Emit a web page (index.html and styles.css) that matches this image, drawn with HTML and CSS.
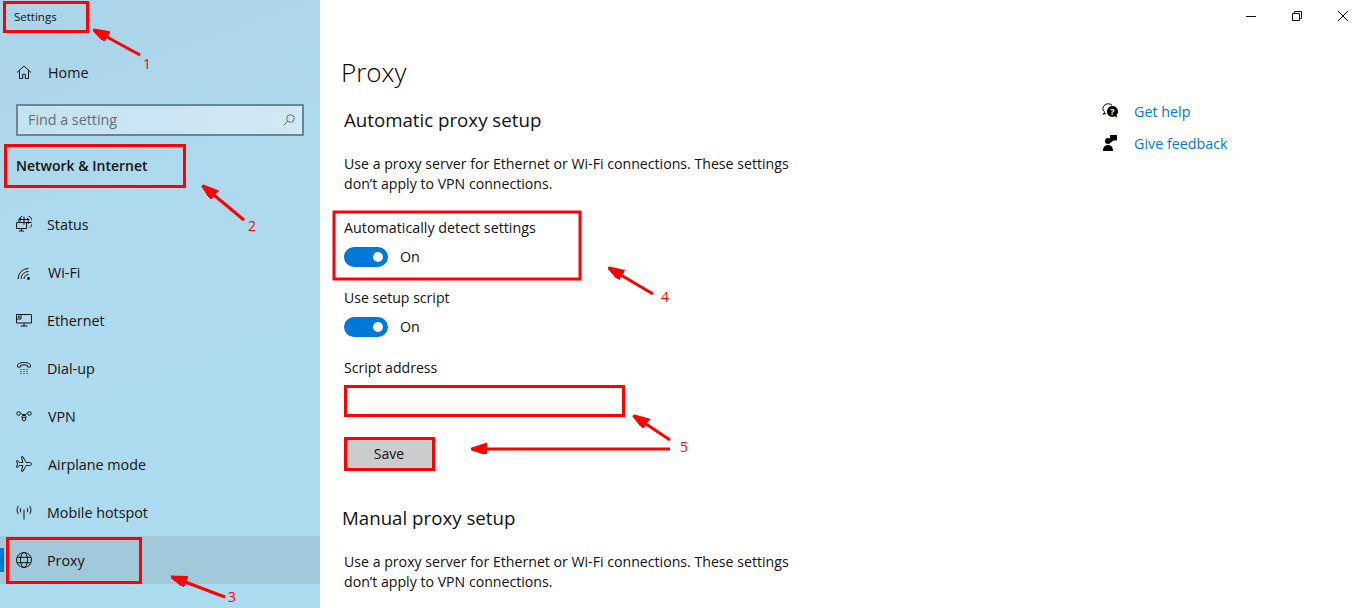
FILE: index.html
```html
<!DOCTYPE html>
<html lang="en">
<head>
    <meta charset="UTF-8">
    <title>Settings</title>
    <link rel="stylesheet" href="styles.css">
</head>
<body>
    <div class="app">
        <aside class="sidebar">
            <div class="app-title">Settings</div>
            <a class="nav-item home wide">
                <svg class="nav-icon" viewBox="0 0 16 16"><path d="M1 8.500 8 2l7 6.500M3.500 6.500v8h3.200v-4.200h2.600v4.200h3.200v-8"/></svg>
                <span>Home</span>
            </a>
            <div class="search">
                <span>Find a setting</span>
                <svg class="search-icon" viewBox="0 0 12 12"><circle cx="7.500" cy="4.500" r="3.800"/><path d="M4.700 7.300.6 11.500"/></svg>
            </div>
            <h2 class="section-title">Network &amp; Internet</h2>
            <nav class="nav-list">
                <a class="nav-item">
                    <svg class="nav-icon" viewBox="0 0 16 16"><path d="M2.500 5.500A7 7 0 1 1 14 11.500M8 .6v8M4.800 1.800C4.300 3 4 4.200 4 5.500M11.200 1.800c1 1.600 1.300 3.400 1.200 6M3 3.500h10.500M8 6.500h7.400M.6 6.500h10v6H.6zM5.600 12.500v2.500M3 15h5"/></svg>
                    <span>Status</span>
                </a>
                <a class="nav-item wide">
                    <svg class="nav-icon" viewBox="0 0 16 16"><path d="M2 15A10.500 10.500 0 0 1 12.500 4.500M5 15a7.500 7.500 0 0 1 7.500-7.500M8 15a4.500 4.500 0 0 1 4.500-4.500"/><circle class="solid" cx="12.500" cy="14.500" r="1.400"/></svg>
                    <span>Wi-Fi</span>
                </a>
                <a class="nav-item">
                    <svg class="nav-icon" viewBox="0 0 16 16"><path d="M.5 2.500h15V11H.5zM.5 2.500H5V7H.5zM2.200 4.300h1.200v1H2.200zM8 11v3M4.500 14h7"/></svg>
                    <span>Ethernet</span>
                </a>
                <a class="nav-item">
                    <svg class="nav-icon" viewBox="0 0 16 16"><path d="M1.500 7V5.200C1.500 3.600 4.500 2.500 8 2.500s6.500 1.100 6.500 2.700V7h-3V5.300c-1-.5-6-.5-7 0V7z"/><path class="dots" d="M4.500 9.500h1M7.500 9.500h1M10.500 9.500h1M4.500 11.500h1M7.500 11.500h1M10.500 11.500h1M4.500 13.500h1M7.500 13.500h1M10.500 13.500h1"/></svg>
                    <span>Dial-up</span>
                </a>
                <a class="nav-item wide">
                    <svg class="nav-icon" viewBox="0 0 16 16"><circle cx="2.600" cy="5.500" r="1.800"/><circle cx="13.400" cy="5.500" r="1.800"/><circle cx="8" cy="11" r="1.800"/><path d="M4.400 5.500c1.500 0 2.200 1.200 3.600 2.500 1.400-1.300 2-2.500 3.600-2.500M6.500 10C5.500 9 5.800 7.500 8 6.300c2.200 1.200 2.500 2.700 1.500 3.700"/></svg>
                    <span>VPN</span>
                </a>
                <a class="nav-item wide">
                    <svg class="nav-icon" viewBox="0 0 16 16"><path d="M15.500 8c0-1-1-1.500-2-1.500H10L7 .8H5.500l1.300 5.700H3.500L2 4.800H.6l.9 3.200-.9 3.200H2l1.500-1.700h3.300L5.500 15.200H7L10 9.500h3.500c1 0 2-.5 2-1.500z"/></svg>
                    <span>Airplane mode</span>
                </a>
                <a class="nav-item">
                    <svg class="nav-icon" viewBox="0 0 16 16"><path d="M8 5.500v10M2.400 2C.6 4.200.6 7.300 2.400 10M13.600 2c1.800 2.200 1.800 5.300 0 8M5 3.800c-1 1.300-1 3 0 4.500M11 3.800c1 1.300 1 3 0 4.500"/></svg>
                    <span>Mobile hotspot</span>
                </a>
                <a class="nav-item active">
                    <svg class="nav-icon" viewBox="0 0 16 16"><circle cx="8" cy="8" r="7.500"/><ellipse cx="8" cy="8" rx="3.500" ry="7.500"/><path d="M1.200 5.300h13.600M1.200 10.700h13.600"/></svg>
                    <span>Proxy</span>
                </a>
            </nav>
        </aside>

        <main class="content">
            <div class="settings">
                <h1>Proxy</h1>
                <h3>Automatic proxy setup</h3>
                <p class="note">Use a proxy server for Ethernet or Wi-Fi connections. These settings<br>don’t apply to VPN connections.</p>
                <div class="field first">
                    <label>Automatically detect settings</label>
                    <div class="toggle-row"><span class="toggle"></span><span>On</span></div>
                </div>
                <div class="field">
                    <label class="short">Use setup script</label>
                    <div class="toggle-row"><span class="toggle"></span><span>On</span></div>
                </div>
                <div class="field">
                    <label class="short">Script address</label>
                    <div class="text-input"></div>
                </div>
                <button class="save" type="button">Save</button>
                <h3 class="manual">Manual proxy setup</h3>
                <p class="note">Use a proxy server for Ethernet or Wi-Fi connections. These settings<br>don’t apply to VPN connections.</p>
            </div>

            <div class="side-links">
                <a class="link-row">
                    <svg viewBox="0 0 16 16">
                        <path class="line" d="M3 9.500C1 8 .5 6 1.200 4.200 2 2 4 .8 6.300.8c1.500 0 2.800.5 3.700 1.400"/>
                        <path class="line" d="M3 9.500 1 11l3-.3"/>
                        <path class="fill" d="M10.500 3a5.500 5.500 0 0 0-3.900 9.400c1.500 1.400 4.200 1.700 5.900.8l3 1.600-1-2.600A5.500 5.500 0 0 0 10.500 3z"/>
                        <text class="mark" x="10.500" y="11.500">?</text>
                    </svg>
                    <span>Get help</span>
                </a>
                <a class="link-row">
                    <svg viewBox="0 0 16 16"><path class="fill" d="M8 0h7v5.500h-3.500L9 7.500v-2H8zM6 3a3 3 0 1 1 0 6 3 3 0 0 1 0-6zM1 16c0-4 2-6 5-6s5 2 5 6z"/></svg>
                    <span>Give feedback</span>
                </a>
            </div>

            <div class="window-controls">
                <svg viewBox="0 0 10 10"><path d="M0 5.500h10"/></svg>
                <svg viewBox="0 0 10 10"><path d="M.5 2.500h7v7h-7zM2.500 2.500v-2h7v7h-2"/></svg>
                <svg viewBox="0 0 10 10"><path d="M0 0l10 10M10 0 0 10"/></svg>
            </div>
        </main>
    </div>

    <!-- annotations drawn over the screenshot -->
    <svg class="notes" viewBox="0 0 1365 608">
        <defs>
            <marker id="head" markerUnits="userSpaceOnUse" markerWidth="16" markerHeight="12" refX="15" refY="5" orient="auto">
                <path d="M0 0 15 5 0 10 3 5z" fill="#f00"/>
            </marker>
        </defs>
        <rect x="4.500" y="2.500" width="83" height="29"/>
        <rect x="5.500" y="145.500" width="179" height="41"/>
        <rect x="7.500" y="538.500" width="133" height="44"/>
        <rect x="334" y="212" width="246" height="67"/>
        <rect x="345.500" y="386.500" width="278" height="29"/>
        <rect x="345.500" y="438.500" width="88" height="31"/>
        <path d="M140 55 94 30" marker-end="url(#head)"/>
        <path d="M244 220 203 186" marker-end="url(#head)"/>
        <path d="M225 597 172 577" marker-end="url(#head)"/>
        <path d="M653 294 609 268" marker-end="url(#head)"/>
        <path d="M670 440 634 416" marker-end="url(#head)"/>
        <path d="M670 449H472" marker-end="url(#head)"/>
        <text x="143" y="69">1</text>
        <text x="248" y="231">2</text>
        <text x="228" y="602">3</text>
        <text x="661" y="302">4</text>
        <text x="680" y="452">5</text>
    </svg>
</body>
</html>
```

FILE: styles.css
```css
* {
    margin: 0;
    padding: 0;
    box-sizing: border-box;
}

body {
    width: 1365px;
    height: 608px;
    overflow: hidden;
    position: relative;
    font-family: "Open Sans", sans-serif;
    font-size: 14.3px;
    color: #111;
    background-color: white;
}

.app {
    display: flex;
    height: 608px;
}

/* left column */
.sidebar {
    width: 320px;
    flex-shrink: 0;
    background: linear-gradient(160deg, #a9d4ea 0%, #aedaef 35%, #abdcf0 100%);
}

.app-title {
    height: 33px;
    padding: 9px 0 0 14px;
    font-size: 11.500px;
    line-height: 16px;
}

.nav-item {
    display: flex;
    align-items: center;
    height: 48px;
    padding-left: 16px;
    gap: 15px;
}

.nav-item.wide {
    gap: 16px;
}

.nav-item span {
    line-height: 20px;
    padding-top: 2px;
}

.nav-icon {
    width: 16px;
    height: 16px;
    fill: none;
    stroke: #111;
    stroke-width: 1;
    flex-shrink: 0;
}

.nav-icon .solid {
    fill: #111;
    stroke: none;
}

.home {
    height: 40px;
    margin-top: 19px;
}

.search {
    display: flex;
    align-items: center;
    justify-content: space-between;
    width: 288px;
    height: 32px;
    margin: 12px 0 0 16px;
    padding: 0 7px 2px 10px;
    border: 2px solid #6c8594;
    background: linear-gradient(90deg, #c5e2f1, #d0e9f5);
    color: #5f6f78;
}

.search-icon {
    width: 12px;
    height: 12px;
    fill: none;
    stroke: #5f6f78;
    margin-top: 2px;
}

.section-title {
    height: 64px;
    padding: 20px 0 0 16px;
    font-size: 14px;
    line-height: 20px;
    font-weight: 600;
}

.nav-list .nav-item.active {
    position: relative;
    background-color: #a2c9db;
}

.nav-item.active::before {
    content: "";
    position: absolute;
    left: 0;
    top: 12px;
    width: 4px;
    height: 24px;
    background-color: #0078d7;
}

/* right part */
.content {
    flex: 1;
    display: flex;
    position: relative;
}

.settings {
    width: 750px;
    padding: 52px 0 0 24px;
}

h1 {
    font-size: 26px;
    font-weight: 300;
    line-height: 40px;
    margin-left: -3px;
    color: #000;
}

h3 {
    font-size: 18.700px;
    font-weight: 400;
    line-height: 28px;
    margin-top: 14px;
}

h3.manual {
    margin: 35px 0 0 -2px;
}

.note {
    margin-top: 20px;
    font-size: 14.150px;
    line-height: 20px;
}

.field {
    margin-top: 21px;
}

.field.first {
    margin-top: 24px;
}

.field label {
    display: block;
    line-height: 20px;
}

.field label.short {
    font-size: 14.100px;
}

.toggle-row {
    display: flex;
    align-items: center;
    gap: 12px;
    margin-top: 9px;
    line-height: 20px;
}

.toggle {
    position: relative;
    width: 44px;
    height: 20px;
    border-radius: 10px;
    background-color: #0078d7;
}

.toggle::after {
    content: "";
    position: absolute;
    right: 5px;
    top: 5px;
    width: 10px;
    height: 10px;
    border-radius: 50%;
    background-color: white;
}

.text-input {
    width: 280px;
    height: 32px;
    margin-top: 7px;
    background-color: white;
}

.save {
    display: block;
    width: 90px;
    height: 32px;
    margin-top: 20px;
    border: none;
    background-color: #ccc;
    color: #111;
    font-family: inherit;
    font-size: 14px;
}

.side-links {
    padding: 95px 0 0 32px;
}

.link-row {
    display: flex;
    align-items: center;
    height: 32px;
    gap: 16px;
    color: #0078d7;
}

.link-row svg {
    width: 16px;
    height: 16px;
    flex-shrink: 0;
}

.link-row .fill {
    fill: #000;
}

.link-row .line {
    fill: none;
    stroke: #000;
}

.link-row .mark {
    fill: white;
    font-size: 9px;
    font-weight: 700;
    text-anchor: middle;
}

.window-controls {
    position: absolute;
    top: 11px;
    right: 17px;
    display: flex;
    gap: 36px;
}

.window-controls svg {
    width: 10px;
    height: 10px;
    fill: none;
    stroke: #111;
    stroke-width: 1;
}

/* red boxes and arrows */
.notes {
    position: absolute;
    left: 0;
    top: 0;
    width: 1365px;
    height: 608px;
    fill: none;
    stroke: #f00;
    stroke-width: 3;
    pointer-events: none;
}

.notes text {
    fill: #f00;
    stroke: none;
    font-family: "Open Sans", sans-serif;
    font-size: 14px;
}
```
